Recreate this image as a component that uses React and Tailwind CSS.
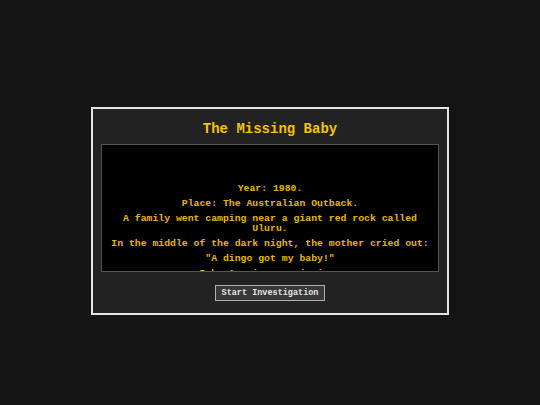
import React from "react";

const story = [
  "Year: 1980.",
  "Place: The Australian Outback.",
  "A family went camping near a giant red rock called Uluru.",
  "In the middle of the dark night, the mother cried out:",
  "\"A dingo got my baby!\"",
  "Baby Azaria was missing.",
  "The police began to ask questions.",
];

const App = () => {
  return (
    <div
      className="min-h-screen w-full bg-[#141414] flex items-center justify-center pt-[17px]"
      style={{ fontFamily: '"Liberation Mono", "DejaVu Sans Mono", monospace' }}
    >
      {/* Card */}
      <div className="w-[358px] border-2 border-[#e4e4e4] bg-[#222222] px-2 pt-[12px] pb-[12px] flex flex-col items-center">
        <h1 className="text-[14px] leading-[16px] font-bold text-[#f5c400] mb-[7px]">
          The Missing Baby
        </h1>

        {/* Story box */}
        <div className="w-full h-[128px] overflow-hidden bg-black border border-[#555555] px-2 pt-[39px]">
          <div className="flex flex-col gap-[5px] text-center">
            {story.map((line, i) => (
              <p
                key={i}
                className="text-[9.8px] leading-[10px] font-bold text-[#e8b800]"
              >
                {line}
              </p>
            ))}
          </div>
        </div>

        <button className="mt-[13px] py-0 px-[6px] bg-[#383838] border border-[#b0b0b0] text-[8.5px] leading-[14px] font-bold text-[#e6e6e6]">
          Start Investigation
        </button>
      </div>
    </div>
  );
};

export default App;
